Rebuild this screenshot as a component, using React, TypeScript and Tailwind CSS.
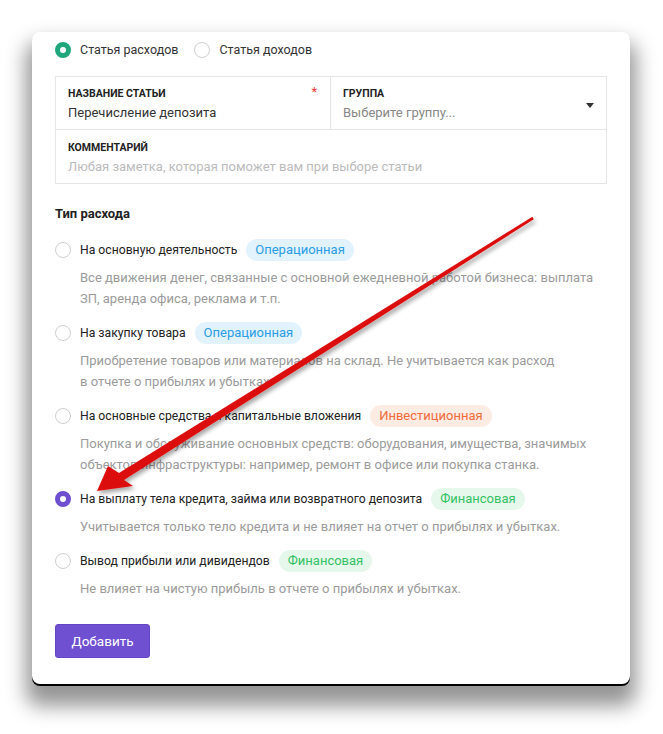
import { useState } from "react";

type Kind = "op" | "inv" | "fin";

interface Option {
  id: string;
  title: string;
  kind: Kind;
  lines: string[];
}

const options: Option[] = [
  {
    id: "main",
    title: "На основную деятельность",
    kind: "op",
    lines: [
      "Все движения денег, связанные с основной ежедневной работой бизнеса: выплата",
      "ЗП, аренда офиса, реклама и т.п.",
    ],
  },
  {
    id: "goods",
    title: "На закупку товара",
    kind: "op",
    lines: [
      "Приобретение товаров или материалов на склад. Не учитывается как расход",
      "в отчете о прибылях и убытках.",
    ],
  },
  {
    id: "capex",
    title: "На основные средства и капитальные вложения",
    kind: "inv",
    lines: [
      "Покупка и обслуживание основных средств: оборудования, имущества, значимых",
      "объектов инфраструктуры: например, ремонт в офисе или покупка станка.",
    ],
  },
  {
    id: "loan",
    title: "На выплату тела кредита, займа или возвратного депозита",
    kind: "fin",
    lines: ["Учитывается только тело кредита и не влияет на отчет о прибылях и убытках."],
  },
  {
    id: "div",
    title: "Вывод прибыли или дивидендов",
    kind: "fin",
    lines: ["Не влияет на чистую прибыль в отчете о прибылях и убытках."],
  },
];

const badges: Record<Kind, { label: string; cls: string }> = {
  op: { label: "Операционная", cls: "bg-[#e3f3fd] text-[#2a9de6]" },
  inv: { label: "Инвестиционная", cls: "bg-[#fdece3] text-[#f26b3a]" },
  fin: { label: "Финансовая", cls: "bg-[#e6f8ec] text-[#33c163]" },
};

function Radio({ checked, color }: { checked: boolean; color: string }) {
  if (checked) {
    return (
      <span
        className={`w-4 h-4 rounded-full border-[5px] bg-white shrink-0 ${color}`}
      />
    );
  }
  return <span className="w-4 h-4 rounded-full border border-[#cfcfcf] bg-white shrink-0" />;
}

function Arrow() {
  return (
    <svg
      className="absolute left-0 top-0 pointer-events-none"
      width={663}
      height={734}
      viewBox="0 0 663 734"
    >
      <defs>
        <filter id="arrowShadow" x="-10%" y="-10%" width="130%" height="130%">
          <feDropShadow dx="2" dy="3" stdDeviation="2" floodColor="#000" floodOpacity="0.35" />
        </filter>
        <linearGradient id="arrowFill" x1="0" y1="0" x2="1" y2="1">
          <stop offset="0" stopColor="#e81212" />
          <stop offset="1" stopColor="#d00a0a" />
        </linearGradient>
      </defs>
      <polygon
        filter="url(#arrowShadow)"
        fill="url(#arrowFill)"
        points="97,491 108,466 119,473 532.4,216.8 533.8,219.2 124,480 133,486"
      />
    </svg>
  );
}

export default function App() {
  const [kind, setKind] = useState<"exp" | "inc">("exp");
  const [selected, setSelected] = useState("loan");

  return (
    <div
      className="relative w-[663px] h-[734px] bg-white overflow-hidden"
      style={{ fontFamily: "Roboto, 'Noto Sans', sans-serif" }}
    >
      <div className="absolute left-[32px] top-[32px] w-[598px] bg-white rounded-[8px] shadow-[0_2px_0_#000,0_16px_20px_6px_rgba(0,0,0,0.42)] px-[23px] pt-[9px] pb-[26px]">
        {/* Expense / income switch */}
        <div className="flex items-center h-[18px] text-[12.5px] text-[#333]">
          <button className="flex items-center gap-[9px]" onClick={() => setKind("exp")}>
            <Radio checked={kind === "exp"} color="border-[#1fa67a]" />
            <span>Статья расходов</span>
          </button>
          <button className="flex items-center gap-[9px] ml-[16px]" onClick={() => setKind("inc")}>
            <Radio checked={kind === "inc"} color="border-[#1fa67a]" />
            <span>Статья доходов</span>
          </button>
        </div>

        {/* Fields */}
        <div className="mt-[17px] border border-[#e6e6e6]">
          <div className="grid grid-cols-2 h-[53px] border-b border-[#e6e6e6]">
            <div className="relative pl-[12px] pt-[10px] border-r border-[#e6e6e6]">
              <div className="text-[10.5px] font-bold uppercase text-[#222] leading-[14px]">
                Название статьи
              </div>
              <div className="text-[13px] text-[#333] leading-[18px] mt-[3px]">
                Перечисление депозита
              </div>
              <span className="absolute right-[13px] top-[5px] text-[#e53935] text-[13px]">*</span>
            </div>
            <div className="relative pl-[12px] pt-[10px]">
              <div className="text-[10.5px] font-bold uppercase text-[#222] leading-[14px]">
                Группа
              </div>
              <div className="text-[13px] text-[#888] leading-[18px] mt-[3px]">
                Выберите группу...
              </div>
              <span className="absolute right-[12px] top-[26px] w-0 h-0 border-l-[4px] border-r-[4px] border-t-[5px] border-l-transparent border-r-transparent border-t-[#333]" />
            </div>
          </div>
          <div className="h-[53px] pl-[12px] pt-[11px]">
            <div className="text-[10.5px] font-bold uppercase text-[#222] leading-[14px]">
              Комментарий
            </div>
            <div className="text-[13px] text-[#bbb] leading-[18px] mt-[3px]">
              Любая заметка, которая поможет вам при выборе статьи
            </div>
          </div>
        </div>

        {/* Type */}
        <div className="mt-[21px] text-[13px] font-bold text-[#222] leading-[18px]">Тип расхода</div>

        <div className="mt-[16px] flex flex-col gap-[13px]">
          {options.map((o) => {
            const b = badges[o.kind];
            return (
              <div key={o.id} className="cursor-pointer" onClick={() => setSelected(o.id)}>
                <div className="flex items-center h-[22px]">
                  <Radio checked={selected === o.id} color="border-[#6e4fd0]" />
                  <span className="ml-[9px] text-[12.2px] text-[#222]">{o.title}</span>
                  <span
                    className={`ml-[9px] h-[22px] px-[9px] rounded-full flex items-center text-[13px] ${b.cls}`}
                  >
                    {b.label}
                  </span>
                </div>
                <div className="mt-[6px] pl-[25px] text-[13px] leading-[21px] text-[#9b9b9b]">
                  {o.lines.map((l) => (
                    <div key={l} className="whitespace-nowrap">
                      {l}
                    </div>
                  ))}
                </div>
              </div>
            );
          })}
        </div>

        <button className="mt-[25px] w-[95px] h-[34px] rounded-[3px] bg-[#6f50d1] text-white text-[13.5px] border border-[#6346c4]">
          Добавить
        </button>
      </div>
      <Arrow />
    </div>
  );
}
